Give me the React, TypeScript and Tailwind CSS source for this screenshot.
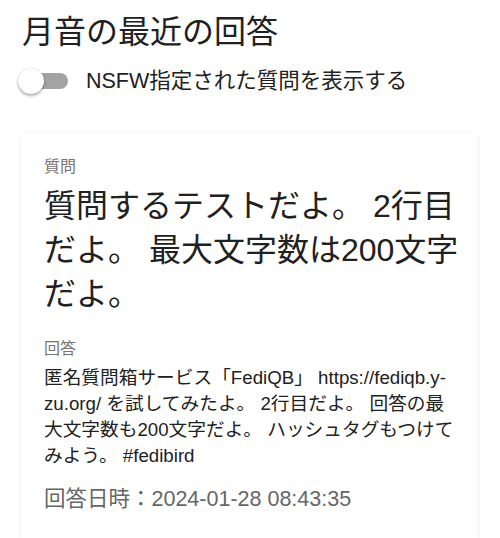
import React, { useState } from 'react';

const font = 'font-["Liberation_Sans","Noto_Sans_CJK_JP",sans-serif]';

export default function App(): React.ReactElement {
  const [showNsfw, setShowNsfw] = useState(false);

  return (
    <div className={`${font} min-h-screen bg-white text-[#212121]`}>
      <div className="px-[22px] pt-[12px]">
        <h1 className="text-[32px] leading-[40px] font-normal">月音の最近の回答</h1>

        {/* NSFW toggle */}
        <label className="mt-[15px] flex items-center gap-[16px] cursor-pointer">
          <button
            type="button"
            role="switch"
            aria-checked={showNsfw}
            onClick={() => setShowNsfw(!showNsfw)}
            className="relative h-[26px] w-[48px] shrink-0"
          >
            <span className="absolute left-[2px] top-[5px] h-[16px] w-[44px] rounded-full bg-[#a3a3a3]" />
            <span
              className={`absolute top-0 h-[26px] w-[26px] rounded-full bg-white shadow-[0_2px_3px_rgba(0,0,0,0.3),0_0_1px_rgba(0,0,0,0.25)] ${
                showNsfw ? 'left-[22px]' : '-left-[4px]'
              }`}
            />
          </button>
          <span className="text-[21.5px] leading-[28px]">NSFW指定された質問を表示する</span>
        </label>
      </div>

      {/* Answer card */}
      <div className="mt-[38px] ml-[21px] w-[457px] rounded-[5px] bg-white pl-[23px] pr-[18px] pt-[22px] pb-[28px] shadow-[0_2px_1px_-1px_rgba(0,0,0,0.12),0_1px_1px_0_rgba(0,0,0,0.08),0_1px_4px_0_rgba(0,0,0,0.08)]">
        <div className="text-[16px] leading-[24px] text-[#757575]">質問</div>
        <p className="mt-[5px] text-[32px] leading-[44px]">
          質問するテストだよ。 2行目だよ。 最大文字数は200文字だよ。
        </p>

        <div className="mt-[21px] text-[16px] leading-[24px] text-[#757575]">回答</div>
        <p className="mt-[4px] text-[18.7px] leading-[26px]">
          匿名質問箱サービス「FediQB」 https://fediqb.y-zu.org/ を試してみたよ。 2行目だよ。 回答の最大文字数も200文字だよ。 ハッシュタグもつけてみよう。 #fedibird
        </p>

        <div className="mt-[15px] text-[21.5px] leading-[30px] text-[#666666]">
          回答日時：2024-01-28 08:43:35
        </div>
      </div>
    </div>
  );
}
